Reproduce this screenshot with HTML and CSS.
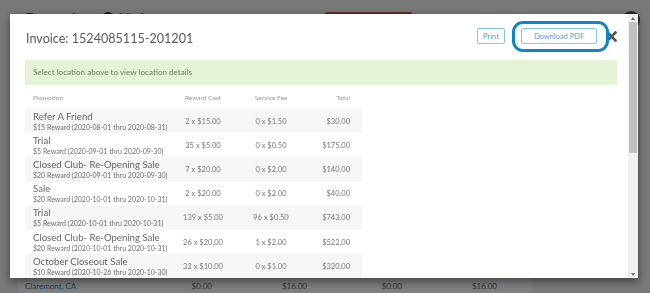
FILE: index.html
```html
<!DOCTYPE html>
<html lang="en">
<head>
    <meta charset="UTF-8">
    <meta name="viewport" content="width=device-width, initial-scale=1.0">
    <title>Invoice 1524085115-201201</title>
    <link rel="stylesheet" href="styles.css">
</head>
<body>
    <div class="page">
        <div class="page-header">
            <div class="logo">Everyday <span class="logo-icon"></span>Hub</div>
            <div class="nav-btn">New Campaign</div>
            <div class="nav-link">Help</div>
            <div class="avatar"></div>
        </div>
        <div class="card">
            <div class="loc-row">
                <a href="#">Claremont, CA</a><span>$0.00</span><span>$16.00</span><span>$0.00</span><span>$16.00</span>
            </div>
        </div>
    </div>

    <div class="overlay">
        <div class="modal">
            <div class="modal-content">
                <div class="modal-header">
                    <h2 class="modal-title">Invoice: 1524085115-201201</h2>
                    <div class="actions">
                        <button class="btn">Print</button>
                        <span class="highlight"><button class="btn btn-wide">Download PDF</button></span>
                        <button class="close" aria-label="Close">
                            <svg width="11" height="11" viewBox="0 0 11 11"><path d="M1.5 1.5 L9.5 9.5 M9.5 1.5 L1.5 9.5" stroke="#555" stroke-width="2.6" stroke-linecap="square"/></svg>
                        </button>
                    </div>
                </div>
                <div class="modal-body">
                    <div class="alert">Select location above to view location details</div>
                    <div class="invoice-table" id="invoiceTable">
                        <div class="inv-row inv-head">
                            <span>Promotion</span><span class="c">Reward Cost</span><span class="c">Service Fee</span><span class="r">Total</span>
                        </div>
                    </div>
                </div>
            </div>
            <div class="scrollbar">
                <div class="sb-btn sb-up"></div>
                <div class="sb-thumb"></div>
                <div class="sb-track"></div>
                <div class="sb-btn sb-down"></div>
            </div>
        </div>
    </div>

    <script>
        const lines = [
            ['Refer A Friend', '$15 Reward (2020-08-01 thru 2020-08-31)', '2 x $15.00', '0 x $1.50', '$30.00'],
            ['Trial', '$5 Reward (2020-09-01 thru 2020-09-30)', '35 x $5.00', '0 x $0.50', '$175.00'],
            ['Closed Club- Re-Opening Sale', '$20 Reward (2020-09-01 thru 2020-09-30)', '7 x $20.00', '0 x $2.00', '$140.00'],
            ['Sale', '$20 Reward (2020-10-01 thru 2020-10-31)', '2 x $20.00', '0 x $2.00', '$40.00'],
            ['Trial', '$5 Reward (2020-10-01 thru 2020-10-31)', '139 x $5.00', '96 x $0.50', '$743.00'],
            ['Closed Club- Re-Opening Sale', '$20 Reward (2020-10-01 thru 2020-10-31)', '26 x $20.00', '1 x $2.00', '$522.00'],
            ['October Closeout Sale', '$10 Reward (2020-10-26 thru 2020-10-30)', '32 x $10.00', '0 x $1.00', '$320.00']
        ];

        const table = document.getElementById('invoiceTable');

        lines.forEach(line => {
            const row = document.createElement('div');
            row.classList.add('inv-row');
            row.innerHTML = `
                <div class="promo">
                    <div class="promo-name">${line[0]}</div>
                    <div class="promo-sub">${line[1]}</div>
                </div>
                <span class="c">${line[2]}</span>
                <span class="c">${line[3]}</span>
                <span class="r">${line[4]}</span>
            `;
            table.appendChild(row);
        });
    </script>
</body>
</html>
```

FILE: styles.css
```css
body {
    margin: 0;
    font-family: Lato, "Liberation Sans", sans-serif;
    background-color: #f2f2f2;
    overflow: hidden;
}
.page-header {
    height: 46px;
    display: flex;
    align-items: flex-start;
    padding: 9px 0 0 25px;
    box-sizing: border-box;
    background: #f2f2f2;
}
.logo {
    color: #2f7ab8;
    font-weight: bold;
    font-size: 15px;
    width: 300px;
    letter-spacing: 1px;
}
.logo-icon {
    display: inline-block;
    width: 12px;
    height: 12px;
    border-radius: 6px 6px 0 0;
    background: #333;
    margin: 0 4px;
}
.nav-btn {
    width: 87px;
    height: 26px;
    margin-top: 3px;
    background: #d8542a;
    border-radius: 2px;
    color: #fff;
    font-size: 10px;
    text-align: center;
    line-height: 26px;
}
.nav-link {
    margin: 3px 0 0 115px;
    color: #444;
    font-size: 11px;
    width: 95px;
}
.avatar {
    width: 18px;
    height: 18px;
    border-radius: 50%;
    background: #555;
    margin-top: 2px;
}
.card {
    margin: 232px 0 0 18px;
    width: 514px;
    height: 15px;
    background: #fff;
    padding: 0 35px 0 7px;
    box-sizing: border-box;
}
.loc-row {
    display: grid;
    grid-template-columns: 1fr 95px 95px 95px 95px;
    font-size: 8px;
    color: #666;
    height: 15px;
    align-items: center;
}
.loc-row span {
    text-align: right;
}
.loc-row a {
    color: #3d80bd;
    text-decoration: none;
}

/* modal */
.overlay {
    position: fixed;
    inset: 0;
    background: rgba(0, 0, 0, 0.5);
    padding: 14px 0 0 10px;
}
.modal {
    width: 628px;
    height: 264px;
    background: #fff;
    display: flex;
    box-shadow: 0 3px 9px rgba(0, 0, 0, 0.5);
}
.modal-content {
    flex: 1;
    overflow: hidden;
}
.scrollbar {
    width: 10px;
    display: flex;
    flex-direction: column;
    background: #f1f1f1;
}
.sb-btn {
    height: 8px;
    display: flex;
    justify-content: center;
    align-items: center;
}
.sb-up::before,
.sb-down::before {
    content: "";
    border-left: 2.5px solid transparent;
    border-right: 2.5px solid transparent;
}
.sb-up::before {
    border-bottom: 3px solid #666;
}
.sb-down::before {
    border-top: 3px solid #666;
}
.sb-thumb {
    height: 131px;
    margin: 0 1px;
    background: #c1c1c1;
}
.sb-track {
    flex: 1;
}
.modal-header {
    display: flex;
    align-items: center;
    justify-content: space-between;
    padding: 14px 11px 0 16px;
    height: 16px;
}
.modal-title {
    margin: 4px 0 0;
    font-size: 12.6px;
    font-weight: normal;
    color: #5a5a5a;
}
.actions {
    display: flex;
    align-items: center;
}
.btn {
    height: 16px;
    width: 28px;
    padding: 0;
    background: #fff;
    border: 1px solid #86c6ea;
    border-radius: 2px;
    color: #4ba3d8;
    font-family: Lato, "Liberation Sans", sans-serif;
    font-size: 7.5px;
    cursor: pointer;
}
.btn-wide {
    width: 76px;
}
.highlight {
    position: relative;
    display: flex;
    margin-left: 16px;
}
.highlight::after {
    content: "";
    position: absolute;
    top: -7px;
    bottom: -8px;
    left: -9px;
    right: -12px;
    border: 3px solid #0d85c8;
    border-radius: 11px;
}
.close {
    background: none;
    border: none;
    padding: 0;
    margin-left: 9px;
    display: flex;
    cursor: pointer;
}
.modal-body {
    padding: 16px 11px 20px 15px;
}
.alert {
    background: #e4f2d6;
    color: #6b7a60;
    font-size: 8.1px;
    height: 25px;
    line-height: 25px;
    padding-left: 8px;
}
.invoice-table {
    width: 337px;
}
.inv-row {
    display: grid;
    grid-template-columns: 145px 66px 70px 56px;
    align-items: center;
    height: 24.2px;
    font-size: 7.5px;
    color: #777;
}
.inv-row:nth-child(even) {
    background: #f6f6f6;
}
.inv-head {
    color: #999;
    font-size: 6.5px;
    height: 24px;
}
.inv-row > :first-child {
    padding-left: 8px;
}
.inv-row .c {
    text-align: center;
}
.inv-row .r {
    text-align: right;
    padding-right: 12px;
}
.promo-name {
    font-size: 9.6px;
    color: #666;
    line-height: 12px;
}
.promo-sub {
    font-size: 7px;
    color: #707070;
    line-height: 9px;
    white-space: nowrap;
}
```
